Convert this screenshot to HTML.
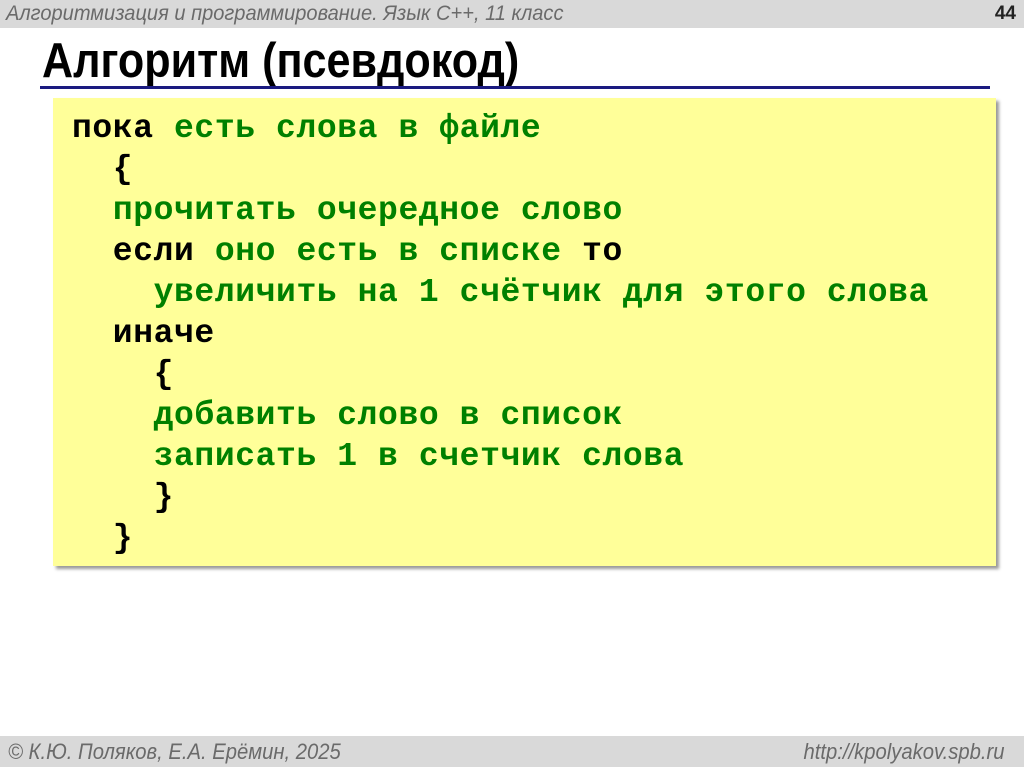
<!DOCTYPE html>
<html><head><meta charset="utf-8"><style>
body{margin:0;width:1024px;height:767px;background:#fff;position:relative;overflow:hidden;font-family:"Liberation Sans",sans-serif}
.hdr{position:absolute;left:0;top:0;width:1024px;height:28px;background:#d9d9d9}
.hdr .t{position:absolute;left:6px;top:2px;font-size:21px;font-style:italic;color:#6a6a6a;transform:scaleX(.955);transform-origin:left;white-space:nowrap}
.hdr .n{position:absolute;right:8px;top:3px;font-size:19px;font-weight:bold;color:#222}
.title{position:absolute;left:42px;top:33px;font-size:49px;font-weight:bold;color:#000;transform:scaleX(.88);transform-origin:left;white-space:nowrap}
.rule{position:absolute;left:40px;top:86px;width:950px;height:3px;background:#1a1a80}
.box{position:absolute;left:53px;top:98px;width:943px;height:468px;background:#ffff99;box-shadow:3px 3px 3px #999}
pre{position:absolute;left:72px;top:108px;margin:0;font-family:"Liberation Mono",monospace;font-weight:bold;font-size:33px;letter-spacing:0.6px;line-height:41px;color:#000}
.g{color:#008000}
.ftr{position:absolute;left:0;top:736px;width:1024px;height:31px;background:#d9d9d9;font-size:22px;font-style:italic;color:#6a6a6a}
.ftr .l{position:absolute;left:8px;top:3px;transform:scaleX(.92);transform-origin:left;white-space:nowrap}
.ftr .r{position:absolute;right:20px;top:3px;transform:scaleX(.92);transform-origin:right;white-space:nowrap}
</style></head><body>
<div class="hdr"><span class="t">Алгоритмизация и программирование. Язык С++, 11 класс</span><span class="n">44</span></div>
<div class="title">Алгоритм (псевдокод)</div>
<div class="rule"></div>
<div class="box"></div>
<pre>пока <span class="g">есть слова в файле</span>
  {
  <span class="g">прочитать очередное слово</span>
  если <span class="g">оно есть в списке</span> то
    <span class="g">увеличить на 1 счётчик для этого слова</span>
  иначе
    {
    <span class="g">добавить слово в список</span>
    <span class="g">записать 1 в счетчик слова</span>
    }
  }</pre>
<div class="ftr"><span class="l">© К.Ю. Поляков, Е.А. Ерёмин, 2025</span><span class="r">http://kpolyakov.spb.ru</span></div>
</body></html>
